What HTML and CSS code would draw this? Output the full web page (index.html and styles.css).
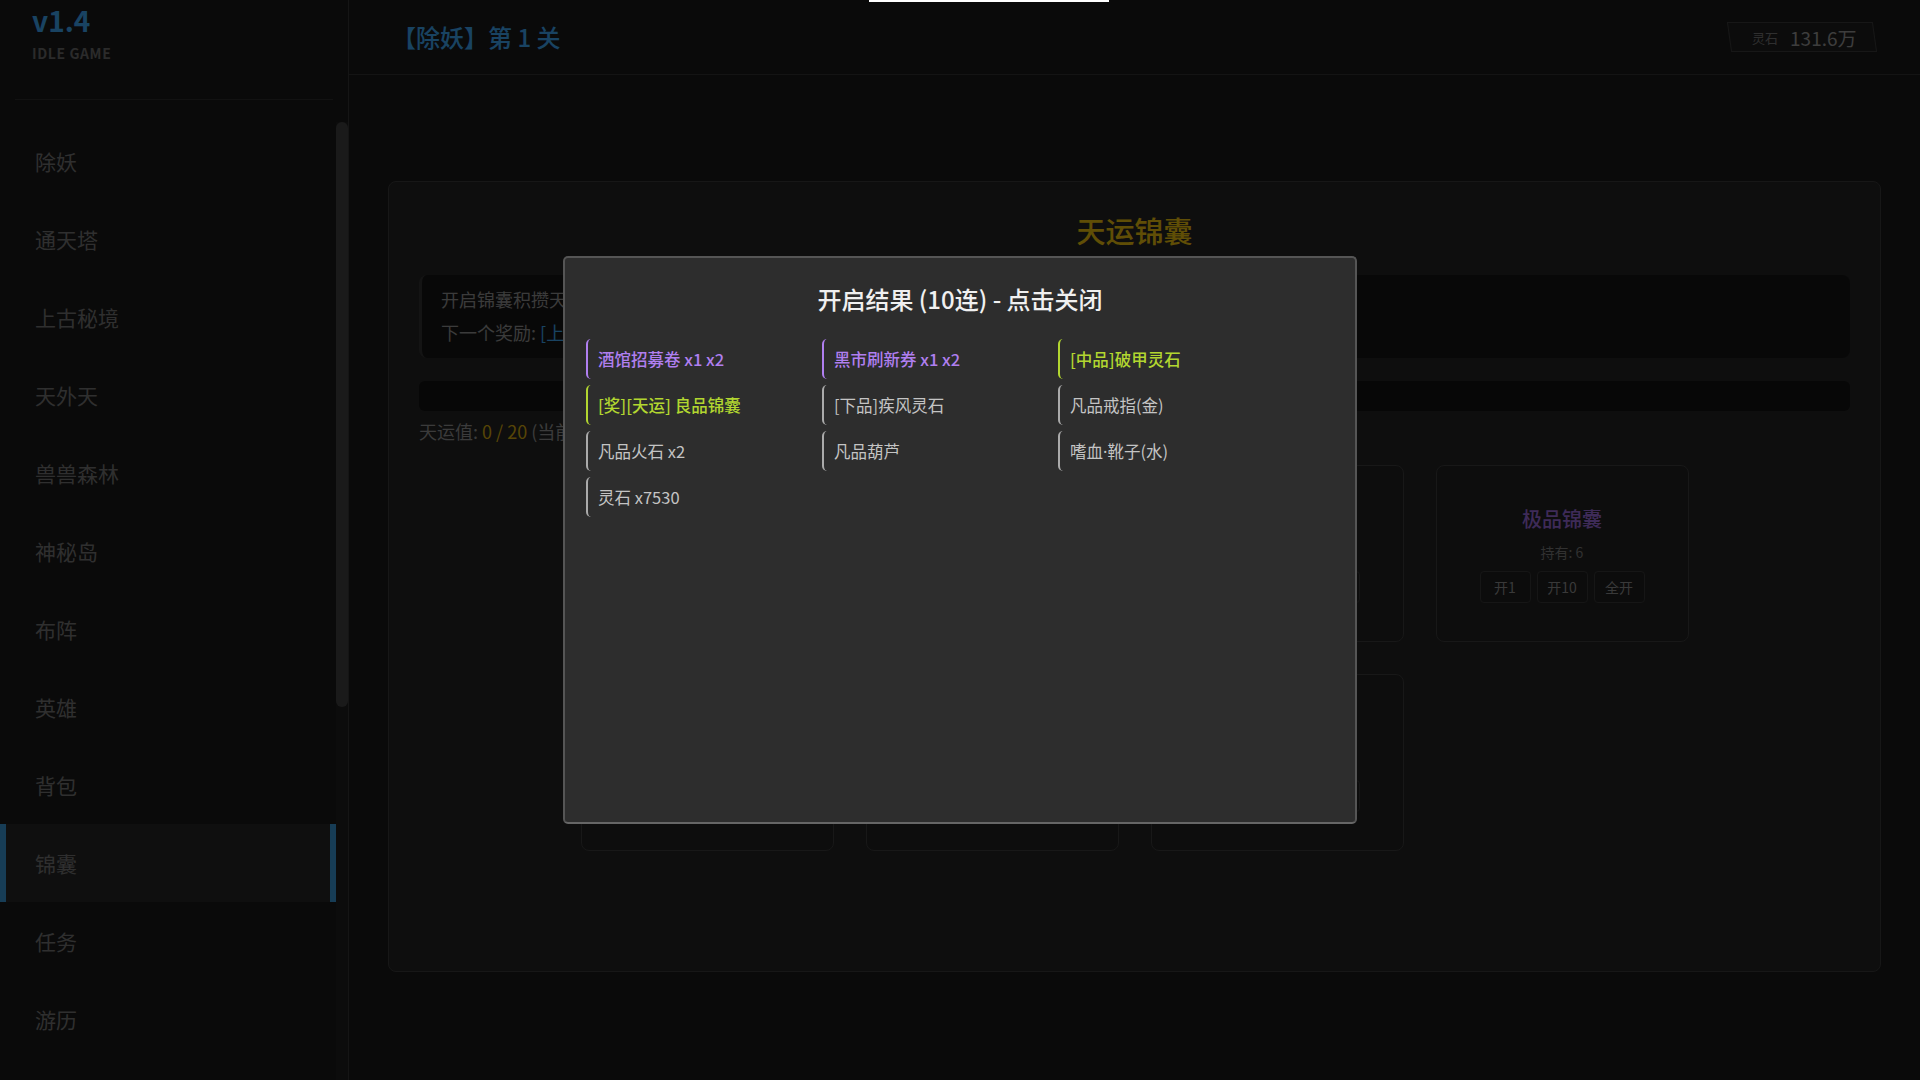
FILE: index.html
```html
<!DOCTYPE html>
<html lang="zh-CN">
<head>
    <meta charset="UTF-8">
    <meta name="viewport" content="width=device-width, initial-scale=1.0">
    <title>Idle Game v1.4</title>
    <link rel="stylesheet" href="styles.css">
</head>
<body>
    <div class="app">
        <aside class="sidebar">
            <div class="brand">
                <div class="version">v1.4</div>
                <div class="tagline">IDLE GAME</div>
            </div>
            <div class="nav">
                <nav class="nav-list">
                    <a class="nav-item">除妖</a>
                    <a class="nav-item">通天塔</a>
                    <a class="nav-item">上古秘境</a>
                    <a class="nav-item">天外天</a>
                    <a class="nav-item">兽兽森林</a>
                    <a class="nav-item">神秘岛</a>
                    <a class="nav-item">布阵</a>
                    <a class="nav-item">英雄</a>
                    <a class="nav-item">背包</a>
                    <a class="nav-item active">锦囊</a>
                    <a class="nav-item">任务</a>
                    <a class="nav-item">游历</a>
                </nav>
                <!-- menu scroll indicator -->
                <div class="nav-track"><div class="nav-thumb"></div></div>
            </div>
        </aside>

        <main class="main">
            <header class="topbar">
                <h1 class="stage">【除妖】第 1 关</h1>
                <div class="wallet">
                    <span class="wallet-label">灵石</span>
                    <span class="wallet-value">131.6万</span>
                </div>
            </header>

            <section class="content">
                <div class="panel">
                    <h2 class="panel-title">天运锦囊</h2>

                    <div class="luck-info">
                        <p>开启锦囊积攒天运值，天运值满后可领取天运奖励</p>
                        <p>下一个奖励: <span class="reward">[上品]天运锦囊</span></p>
                    </div>

                    <div class="luck-bar"><div class="luck-fill" style="width: 0%"></div></div>
                    <div class="luck-value">天运值: <span class="gold">0 / 20</span> (当前第 1 轮)</div>

                    <div class="bag-grid">
                        <div class="bag-card">
                            <div class="bag-name q-common">普通锦囊</div>
                            <div class="bag-hold">持有: 0</div>
                            <div class="bag-actions"><button>开1</button><button>开10</button><button>全开</button></div>
                        </div>
                        <div class="bag-card">
                            <div class="bag-name q-good">良品锦囊</div>
                            <div class="bag-hold">持有: 1</div>
                            <div class="bag-actions"><button>开1</button><button>开10</button><button>全开</button></div>
                        </div>
                        <div class="bag-card">
                            <div class="bag-name q-fine">上品锦囊</div>
                            <div class="bag-hold">持有: 0</div>
                            <div class="bag-actions"><button>开1</button><button>开10</button><button>全开</button></div>
                        </div>
                        <div class="bag-card">
                            <div class="bag-name q-epic">极品锦囊</div>
                            <div class="bag-hold">持有: 6</div>
                            <div class="bag-actions"><button>开1</button><button>开10</button><button>全开</button></div>
                        </div>
                        <div class="bag-card">
                            <div class="bag-name q-immortal">仙品锦囊</div>
                            <div class="bag-hold">持有: 0</div>
                            <div class="bag-actions"><button>开1</button><button>开10</button><button>全开</button></div>
                        </div>
                        <div class="bag-card">
                            <div class="bag-name q-luck">天运锦囊</div>
                            <div class="bag-hold">持有: 0</div>
                            <div class="bag-actions"><button>开1</button><button>开10</button><button>全开</button></div>
                        </div>
                        <div class="bag-card">
                            <div class="bag-name q-divine">神品锦囊</div>
                            <div class="bag-hold">持有: 0</div>
                            <div class="bag-actions"><button>开1</button><button>开10</button><button>全开</button></div>
                        </div>
                    </div>
                </div>
            </section>
        </main>
    </div>

    <!-- open result popup -->
    <div class="overlay">
        <div class="modal">
            <h3 class="modal-title">开启结果 (10连) - 点击关闭</h3>
            <div class="result-grid">
                <div class="result q-purple">酒馆招募卷 x1 x2</div>
                <div class="result q-purple">黑市刷新券 x1 x2</div>
                <div class="result q-green">[中品]破甲灵石</div>
                <div class="result q-green">[奖][天运] 良品锦囊</div>
                <div class="result">[下品]疾风灵石</div>
                <div class="result">凡品戒指(金)</div>
                <div class="result">凡品火石 x2</div>
                <div class="result">凡品葫芦</div>
                <div class="result">嗜血<span class="dot">·</span>靴子(水)</div>
                <div class="result">灵石 x7530</div>
            </div>
        </div>
    </div>

    <div class="loading-bar"></div>
</body>
</html>
```

FILE: styles.css
```css
* {
    box-sizing: border-box;
}

html, body {
    margin: 0;
    height: 100%;
}

body {
    font-family: "Noto Sans CJK SC", "Noto Sans", sans-serif;
    background-color: #1a1a1a;
    color: #999;
    overflow: hidden;
}

.app {
    display: flex;
    height: 100vh;
}

/* ---------- sidebar ---------- */

.sidebar {
    width: 349px;
    flex-shrink: 0;
    display: flex;
    flex-direction: column;
    min-height: 0;
    background-color: #1a1a1a;
    border-right: 1px solid #363636;
}

.brand {
    height: 100px;
    flex-shrink: 0;
    margin: 0 15px;
    padding: 3px 0 0 17px;
    border-bottom: 1px solid #2e2e2e;
}

.version {
    font-size: 28px;
    line-height: 34px;
    font-weight: 700;
    color: #3fa9f5;
}

.tagline {
    margin-top: 6px;
    font-size: 14px;
    font-weight: 700;
    letter-spacing: 0.6px;
    color: #6b6b6b;
}

.nav {
    flex: 1;
    min-height: 0;
    display: flex;
    margin-top: 22px;
    overflow: hidden;
}

.nav-list {
    flex: 1;
}

.nav-track {
    width: 12px;
    background-color: #1f1f1f;
}

.nav-thumb {
    height: 585px;
    background-color: #424242;
    border-radius: 6px;
}

.nav-item {
    display: flex;
    align-items: center;
    height: 78px;
    padding-left: 29px;
    border-left: 6px solid transparent;
    border-right: 6px solid transparent;
    font-size: 21px;
    color: #777;
    cursor: pointer;
}

.nav-item.active {
    background-color: #262626;
    border-left-color: #3a9ad8;
    border-right-color: #3a9ad8;
}

/* ---------- top bar ---------- */

.main {
    flex: 1;
    display: flex;
    flex-direction: column;
}

.topbar {
    height: 75px;
    flex-shrink: 0;
    display: flex;
    align-items: center;
    justify-content: space-between;
    padding: 0 45px 0 43px;
    border-bottom: 1px solid #333;
}

.stage {
    margin: 0 0 2px;
    font-size: 24px;
    font-weight: 500;
    color: #3fa9f5;
}

.wallet {
    display: flex;
    align-items: center;
    gap: 12px;
    height: 30px;
    padding: 0 18px 0 22px;
    border: 1px solid #3a3a3a;
    background-color: #202020;
    transform: skewX(8deg);
}

.wallet span {
    transform: skewX(-8deg);
}

.wallet-label {
    font-size: 13px;
    color: #777;
}

.wallet-value {
    font-size: 19px;
    color: #999;
}

/* ---------- content ---------- */

.content {
    padding: 106px 39px 0;
}

.panel {
    height: 791px;
    padding: 30px;
    background-color: #232323;
    border: 1px solid #3a3a3a;
    border-radius: 8px;
}

.panel-title {
    margin: 0 0 27px;
    text-align: center;
    font-size: 29px;
    line-height: 36px;
    font-weight: 500;
    color: #f1c40f;
}

.luck-info {
    height: 83px;
    padding: 8px 19px;
    background-color: #161616;
    border-left: 3px solid #333;
    border-radius: 8px;
}

.luck-info p {
    margin: 0;
    font-size: 18px;
    line-height: 33px;
    color: #939393;
}

.reward {
    color: #3fa9f5;
}

.luck-bar {
    height: 30px;
    margin-top: 23px;
    background-color: #121212;
    border-radius: 6px;
    overflow: hidden;
}

.luck-fill {
    height: 100%;
    background-color: #f1c40f;
}

.luck-value {
    margin-top: 8px;
    font-size: 18px;
    line-height: 24px;
    color: #939393;
}

.gold {
    color: #d8ad10;
}

.bag-grid {
    display: grid;
    grid-template-columns: repeat(4, 253px);
    justify-content: center;
    gap: 32px;
    margin-top: 22px;
}

.bag-card {
    height: 177px;
    display: flex;
    flex-direction: column;
    align-items: center;
    padding-top: 38px;
    background-color: #222;
    border: 1px solid #3c3c3c;
    border-radius: 8px;
}

.bag-name {
    font-size: 20px;
    line-height: 30px;
    font-weight: 500;
}

.bag-hold {
    margin-top: 8px;
    font-size: 14px;
    line-height: 20px;
    color: #7a7a7a;
}

.bag-actions {
    display: flex;
    gap: 6px;
    margin-top: 9px;
}

.bag-actions button {
    width: 51px;
    height: 32px;
    font-family: inherit;
    font-size: 14px;
    color: #909090;
    background-color: #1e1e1e;
    border: 1px solid #383838;
    border-radius: 4px;
}

.q-common { color: #bbb; }
.q-good { color: #7ed957; }
.q-fine { color: #3fa9f5; }
.q-epic { color: #9b6bdc; }
.q-immortal { color: #e67e22; }
.q-luck { color: #f1c40f; }
.q-divine { color: #e74c3c; }

/* ---------- result popup ---------- */

.overlay {
    position: fixed;
    inset: 0;
    display: flex;
    align-items: center;
    justify-content: center;
    background-color: rgba(0, 0, 0, 0.6);
}

.modal {
    width: 794px;
    height: 568px;
    padding: 21px 21px;
    background-color: #2d2d2d;
    border: 2px solid #555;
    border-bottom-color: #666;
    border-radius: 5px;
}

.modal-title {
    margin: 0 0 20px;
    text-align: center;
    font-size: 24px;
    line-height: 40px;
    font-weight: 500;
    color: #f0f0f0;
}

.result-grid {
    display: grid;
    grid-template-columns: repeat(3, 230px);
    gap: 6px;
}

.result {
    display: flex;
    align-items: center;
    height: 40px;
    padding: 0 10px;
    border-left: 2px solid #aaa;
    border-radius: 5px;
    font-size: 16.5px;
    color: #c4c4c4;
}

.result .dot {
    font-family: "Noto Sans", sans-serif;
}

.result.q-purple {
    color: #b07ff0;
    border-left-color: #b07ff0;
    font-weight: 500;
}

.result.q-green {
    color: #b2d630;
    border-left-color: #b2d630;
    font-weight: 500;
}

.loading-bar {
    position: fixed;
    top: 0;
    left: 869px;
    width: 240px;
    height: 2px;
    background-color: #fff;
}
```
